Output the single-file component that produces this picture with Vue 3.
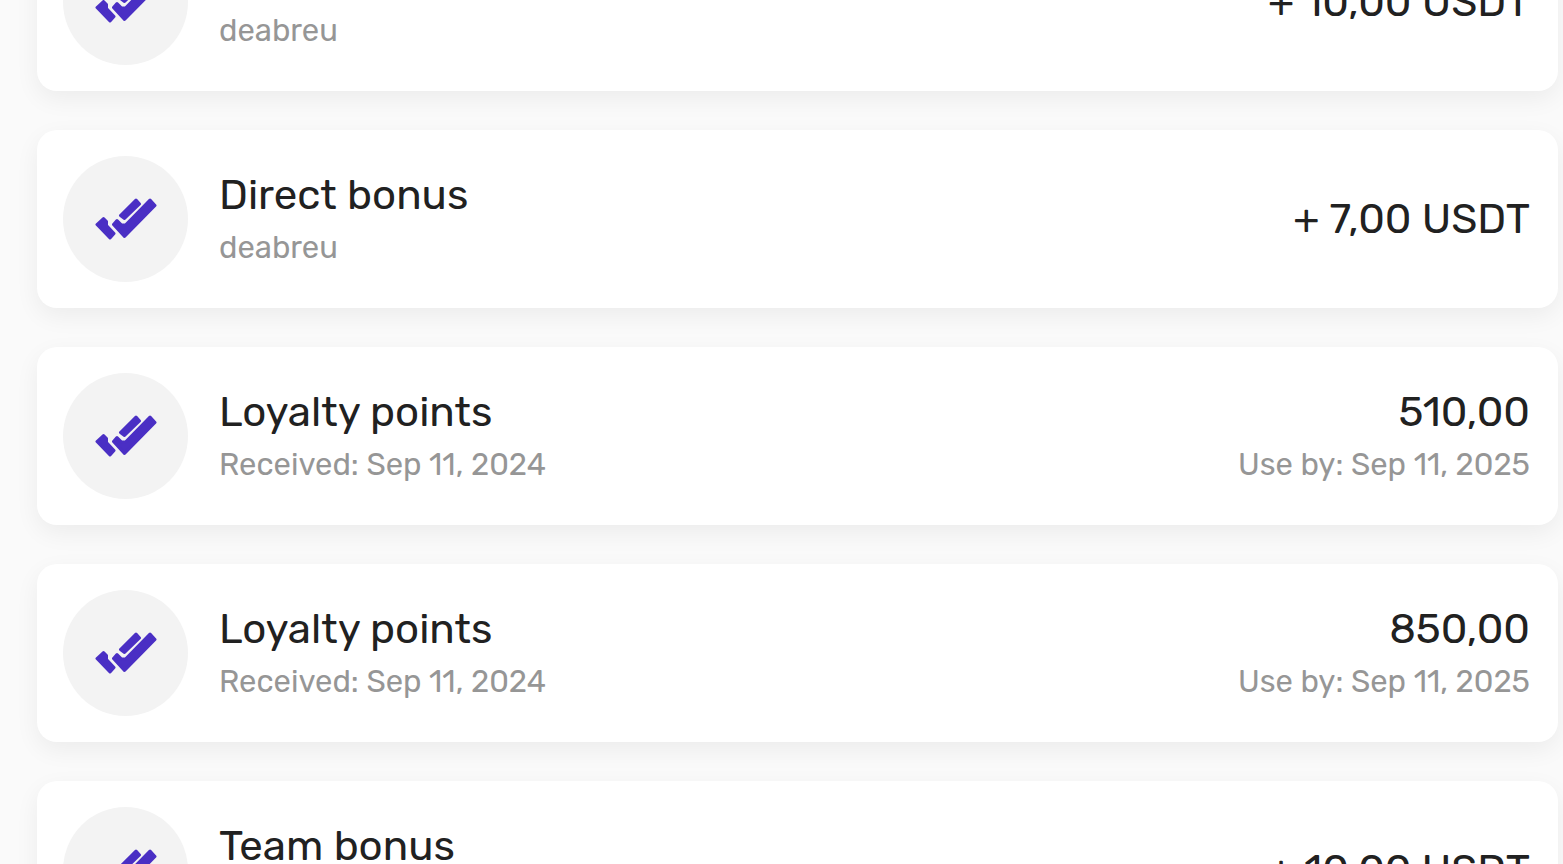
<script setup>
import { ref, unref, onMounted } from 'vue';


const feed = ref(''),
      scrollStart = 87;

const transactions = [
    { id: 1, title: 'Team bonus', detail: 'deabreu', amount: '+ 10,00 USDT' },
    { id: 2, title: 'Direct bonus', detail: 'deabreu', amount: '+ 7,00 USDT' },
    { id: 3, title: 'Loyalty points', detail: 'Received: Sep 11, 2024', amount: '510,00', expires: 'Use by: Sep 11, 2025' },
    { id: 4, title: 'Loyalty points', detail: 'Received: Sep 11, 2024', amount: '850,00', expires: 'Use by: Sep 11, 2025' },
    { id: 5, title: 'Team bonus', detail: 'deabreu', amount: '+ 10,00 USDT' }
];

onMounted(() => {
    unref(feed).scrollTop = scrollStart;
});
</script>

<template>
    <main class="feed" ref="feed">
        <ul class="transactions">
            <li class="card" v-for="item in transactions" :key="item.id">
                <span class="badge">
                    <svg class="checks" viewBox="0 0 62 42" aria-hidden="true">
                        <path d="M8.5 20.5 L2 26.5 L15 40 L19 35.5 L11.5 27.5 V23.5 Z" />
                        <path d="M25.5 17.5 L41 2 L44.5 6 L29.5 20.5 Z" />
                        <path d="M22 22.5 L18.5 26.5 L29.5 38.5 L60 7.5 L55 2 L30.5 27 H26.5 Z" />
                    </svg>
                </span>

                <div class="info">
                    <p class="primary">{{ item.title }}</p>
                    <p class="secondary">{{ item.detail }}</p>
                </div>

                <div class="info value">
                    <p class="primary">{{ item.amount }}</p>
                    <p class="secondary" v-if="item.expires">{{ item.expires }}</p>
                </div>
            </li>
        </ul>
    </main>
</template>

<style>
    body {
        margin: 0;
        background-color: #fafafa;
    }
</style>

<style scoped>
    .feed {
        height: 100vh;
        overflow-y: auto;
        scrollbar-width: none;

        font-family: Rubik, Roboto, sans-serif;
    }

    .transactions {
        margin: 0;
        padding: 0 5px 0 37px;

        display: flex;
        flex-direction: column;
        gap: 39px;

        list-style: none;
    }

    .card {
        padding: 26px 28px 26px 26px;
        border-radius: 20px;

        display: flex;
        align-items: center;
        gap: 31px;

        background-color: white;
        box-shadow: 0 8px 24px rgba(0, 0, 0, .06);
    }

    .badge {
        width: 125px;
        height: 126px;
        border-radius: 50%;

        display: flex;
        flex-shrink: 0;
        justify-content: center;
        align-items: center;

        background-color: #f3f3f3;
    }

    .checks {
        width: 62px;
        height: 42px;

        fill: #4a2fc4;
        stroke: #4a2fc4;
        stroke-width: 3;
        stroke-linejoin: round;
    }

    .info {
        display: flex;
        flex-direction: column;
        gap: 2px;
    }

    .info p {
        margin: 0;
        white-space: nowrap;
    }

    .value {
        margin-left: auto;
        text-align: right;
    }

    .primary {
        color: #212121;
        font-size: 42px;
        line-height: 56px;
    }

    .secondary {
        color: #969696;
        font-size: 31px;
        line-height: 46px;
    }
</style>
